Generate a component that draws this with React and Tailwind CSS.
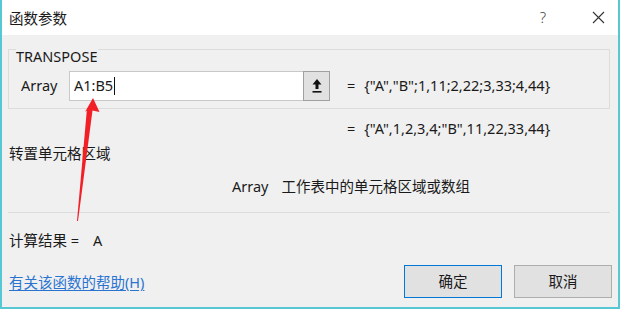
const font = { fontFamily: '"Noto Sans", "Noto Sans CJK SC", sans-serif' }

function RefButton() {
  return (
    <div className="w-[27px] h-[30px] border border-[#a0a0a0] bg-[#e1e1e1] flex items-center justify-center">
      <svg width="12" height="16" viewBox="0 0 12 16">
        <path d="M6 1 L10.5 6.5 H7.5 V11 H4.5 V6.5 H1.5 Z" fill="#111" />
        <rect x="1.5" y="13" width="9" height="1.6" fill="#111" />
      </svg>
    </div>
  )
}

export default function App() {
  return (
    <div
      className="relative w-[620px] h-[309px] bg-[#f0f0f0] border-x-2 border-b-2 border-[#56c8d4] flex flex-col text-[14.5px] text-[#1a1a1a] overflow-hidden"
      style={font}
    >
      {/* Title bar */}
      <div className="h-[35px] bg-white flex items-center pl-[7px] pr-[12px] shrink-0">
        <span className="flex-1 leading-[20px]">函数参数</span>
        <span className="text-[#444] text-[15px] mr-[46px] font-light">?</span>
        <svg width="13" height="13" viewBox="0 0 13 13" className="mr-[1px]">
          <path d="M1 1 L12 12 M12 1 L1 12" stroke="#333" strokeWidth="1.1" />
        </svg>
      </div>

      {/* Function group */}
      <div className="mt-[14px] ml-[6px] mr-[8px] h-[60px] border border-[#dcdcdc] flex flex-col">
        <div className="-mt-[4px] ml-[7px] leading-[20px]">
          <span className="bg-[#f0f0f0] pr-[1px]">TRANSPOSE</span>
        </div>
        <div className="mt-[5px] pl-[12px] flex items-center h-[30px]">
          <span className="w-[48px]">Array</span>
          <div className="w-[234px] h-[30px] bg-white border border-[#c8c8c8] border-r-0 flex items-center pl-[4px]">
            <span>A1:B5</span>
            <span className="w-px h-[18px] bg-[#111] ml-px" />
          </div>
          <RefButton />
          <span className="ml-[17px]">=</span>
          <span className="ml-[9px]">{'{"A","B";1,11;2,22;3,33;4,44}'}</span>
        </div>
      </div>

      <div className="mt-[9px] h-[20px] leading-[20px] flex pl-[345px]">
        <span>=</span>
        <span className="ml-[9px]">{'{"A",1,2,3,4;"B",11,22,33,44}'}</span>
      </div>

      <div className="mt-[5px] h-[20px] leading-[20px] pl-[7px]">转置单元格区域</div>

      <div className="mt-[13px] h-[20px] leading-[20px] flex pl-[230px]">
        <span>Array</span>
        <span className="ml-[13px]">工作表中的单元格区域或数组</span>
      </div>

      <div className="mt-[16px] ml-[6px] mr-[8px] border-t border-[#dcdcdc]" />

      <div className="mt-[17px] h-[20px] leading-[20px] flex pl-[7px]">
        <span>计算结果 =</span>
        <span className="ml-[14px]">A</span>
      </div>

      <div className="mt-[15px] h-[33px] flex items-center pl-[7px] pr-[6px]">
        <a className="flex-1 text-[#2a74d0] underline underline-offset-2 leading-[20px]" href="#">
          有关该函数的帮助(H)
        </a>
        <button className="w-[98px] h-[33px] bg-[#e1e1e1] border border-[#0078d7] text-[#1a1a1a]">确定</button>
        <button className="ml-[12px] w-[98px] h-[33px] bg-[#e1e1e1] border border-[#adadad] text-[#1a1a1a]">取消</button>
      </div>

      {/* Red annotation arrow */}
      <svg className="absolute left-0 top-0 pointer-events-none" width="620" height="309" viewBox="0 0 620 309">
        <polygon
          points="91,98 97.5,112 90.5,110.5 76,221 75,221 84.8,110.5 83,112"
          fill="#f21f27"
        />
      </svg>
    </div>
  )
}
